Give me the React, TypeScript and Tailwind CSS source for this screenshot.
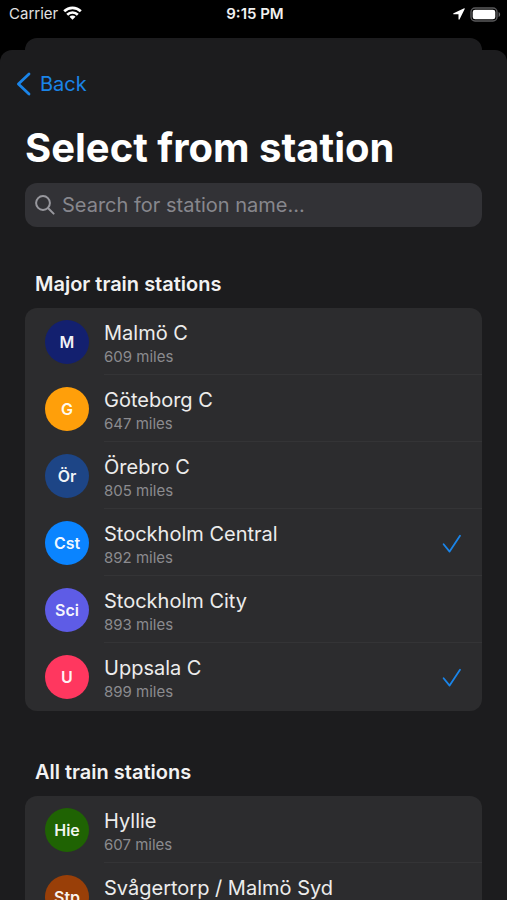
import { useState } from 'react';

type Station = { code: string; name: string; distance: string; color: string };

const majorStations: Station[] = [
  { code: 'M', name: 'Malmö C', distance: '609 miles', color: 'bg-[#13206f]' },
  { code: 'G', name: 'Göteborg C', distance: '647 miles', color: 'bg-[#ff9f0a]' },
  { code: 'Ör', name: 'Örebro C', distance: '805 miles', color: 'bg-[#1d4586]' },
  { code: 'Cst', name: 'Stockholm Central', distance: '892 miles', color: 'bg-[#0a84ff]' },
  { code: 'Sci', name: 'Stockholm City', distance: '893 miles', color: 'bg-[#5e5ce6]' },
  { code: 'U', name: 'Uppsala C', distance: '899 miles', color: 'bg-[#ff375f]' },
];

const allStations: Station[] = [
  { code: 'Hie', name: 'Hyllie', distance: '607 miles', color: 'bg-[#1f6303]' },
  { code: 'Stp', name: 'Svågertorp / Malmö Syd', distance: '608 miles', color: 'bg-[#993f08]' },
];

function StatusBar() {
  return (
    <div className="grid h-7 shrink-0 grid-cols-3 items-center pr-[6px] pl-[9px] text-[15px] leading-5">
      <div className="flex items-center gap-[5px] text-[#e2e2e2]">
        <span>Carrier</span>
        <svg className="mb-[2px] h-[14px] w-[19px]" viewBox="0 0 19 14" fill="none" stroke="#fff" strokeWidth="2.7" aria-hidden="true">
          <path d="M1.2 5.2a11.8 11.8 0 0 1 16.6 0" />
          <path d="M4.2 8.7a7.5 7.5 0 0 1 10.6 0" />
          <path d="M9.5 13.8 6.5 10.8a4.2 4.2 0 0 1 6 0Z" fill="#fff" stroke="none" />
        </svg>
      </div>
      <div className="text-center font-semibold text-[#f0f0f0]">9:15 PM</div>
      <div className="flex items-center justify-end gap-[5px]">
        <svg className="h-3 w-3" viewBox="0 0 12 12" fill="#fff" aria-hidden="true">
          <path d="M11.2.3.6 5.2c-.6.3-.5 1 .1 1h4.8v4.9c0 .6.8.8 1.1.2L11.7 1c.2-.5-.1-.9-.5-.7Z" />
        </svg>
        <svg className="h-[15px] w-[31px]" viewBox="0 0 31 15" aria-hidden="true">
          <rect x="1" y="1" width="26" height="13" rx="4" fill="none" stroke="#59595b" strokeWidth="1.4" />
          <rect x="2.7" y="2.7" width="22.6" height="9.6" rx="2.4" fill="#fff" />
          <path d="M28.6 5v5c2-.9 2-4.1 0-5Z" fill="#6b6b6d" />
        </svg>
      </div>
    </div>
  );
}

function StationRow({ station, selected, onToggle }: { station: Station; selected: boolean; onToggle: () => void }) {
  return (
    <li className="group">
      <button type="button" aria-pressed={selected} onClick={onToggle} className="flex h-[67px] w-full items-center gap-[15px] pl-5 text-left">
        <span className={`flex size-11 shrink-0 items-center justify-center rounded-full text-[16px] leading-5 font-semibold text-white/95 ${station.color}`}>
          {station.code}
        </span>
        <span className="flex h-full min-w-0 flex-1 items-center justify-between border-b border-[#343436] pt-1 pr-5 group-last:border-transparent">
          <span className="flex min-w-0 flex-col">
            <span className="truncate text-[20px] leading-7 text-[#ececec]">{station.name}</span>
            <span className="text-[15px] leading-5 text-[#8b8b8f]">{station.distance}</span>
          </span>
          {selected && (
            <svg className="h-5 w-5 shrink-0" viewBox="0 0 20 20" fill="none" stroke="#1a84e8" strokeWidth="1.8" strokeLinecap="round" strokeLinejoin="round" aria-hidden="true">
              <path d="M1.6 10.2 7.6 17.6 18 1.8" />
            </svg>
          )}
        </span>
      </button>
    </li>
  );
}

function StationSection({ title, stations, selected, onToggle }: { title: string; stations: Station[]; selected: string[]; onToggle: (code: string) => void }) {
  return (
    <section className="flex flex-col gap-[10px]">
      <h2 className="pl-[10px] text-[20px] leading-7 font-semibold text-[#f2f2f2]">{title}</h2>
      <ul className="overflow-hidden rounded-xl bg-[#2c2c2e] pb-px">
        {stations.map((s) => (
          <StationRow key={s.code} station={s} selected={selected.includes(s.code)} onToggle={() => onToggle(s.code)} />
        ))}
      </ul>
    </section>
  );
}

export default function App() {
  const [selected, setSelected] = useState(['Cst', 'U']);
  const toggle = (code: string) =>
    setSelected((cur) => (cur.includes(code) ? cur.filter((c) => c !== code) : [...cur, code]));

  return (
    <div className="flex h-screen flex-col overflow-hidden bg-black font-['Inter','Liberation_Sans',sans-serif] text-white">
      <StatusBar />
      <div className="mx-[25px] mt-[10px] h-3 shrink-0 rounded-t-xl bg-[#1c1c1e]" />
      <main className="flex min-h-0 flex-1 flex-col overflow-hidden rounded-t-xl bg-[#1c1c1e] px-[25px] pt-5">
        <button type="button" className="-ml-[9px] flex shrink-0 items-center gap-[9px] self-start text-[20px] leading-7 text-[#1a84e8]">
          <svg className="h-6 w-[15px]" viewBox="0 0 15 24" fill="none" stroke="currentColor" strokeWidth="2.8" strokeLinecap="round" strokeLinejoin="round" aria-hidden="true">
            <path d="M13 2 2.4 12 13 22" />
          </svg>
          Back
        </button>
        <h1 className="mt-6 shrink-0 text-[40px] leading-[52px] font-bold whitespace-nowrap">Select from station</h1>
        <div className="mt-[9px] flex h-11 shrink-0 items-center gap-[7px] rounded-xl bg-[#323236] px-[10px]">
          <svg className="size-5 shrink-0" viewBox="0 0 20 20" fill="none" stroke="#98989e" strokeWidth="2" strokeLinecap="round" aria-hidden="true">
            <circle cx="8" cy="8" r="6.9" />
            <path d="m13.2 13.2 5.4 5.4" />
          </svg>
          <input type="text" aria-label="Search for station name" placeholder="Search for station name..." className="min-w-0 flex-1 bg-transparent text-[20px] leading-7 text-white outline-none placeholder:text-[#87878d]" />
        </div>
        <div className="mt-[43px] flex shrink-0 flex-col gap-[47px]">
          <StationSection title="Major train stations" stations={majorStations} selected={selected} onToggle={toggle} />
          <StationSection title="All train stations" stations={allStations} selected={selected} onToggle={toggle} />
        </div>
      </main>
    </div>
  );
}
